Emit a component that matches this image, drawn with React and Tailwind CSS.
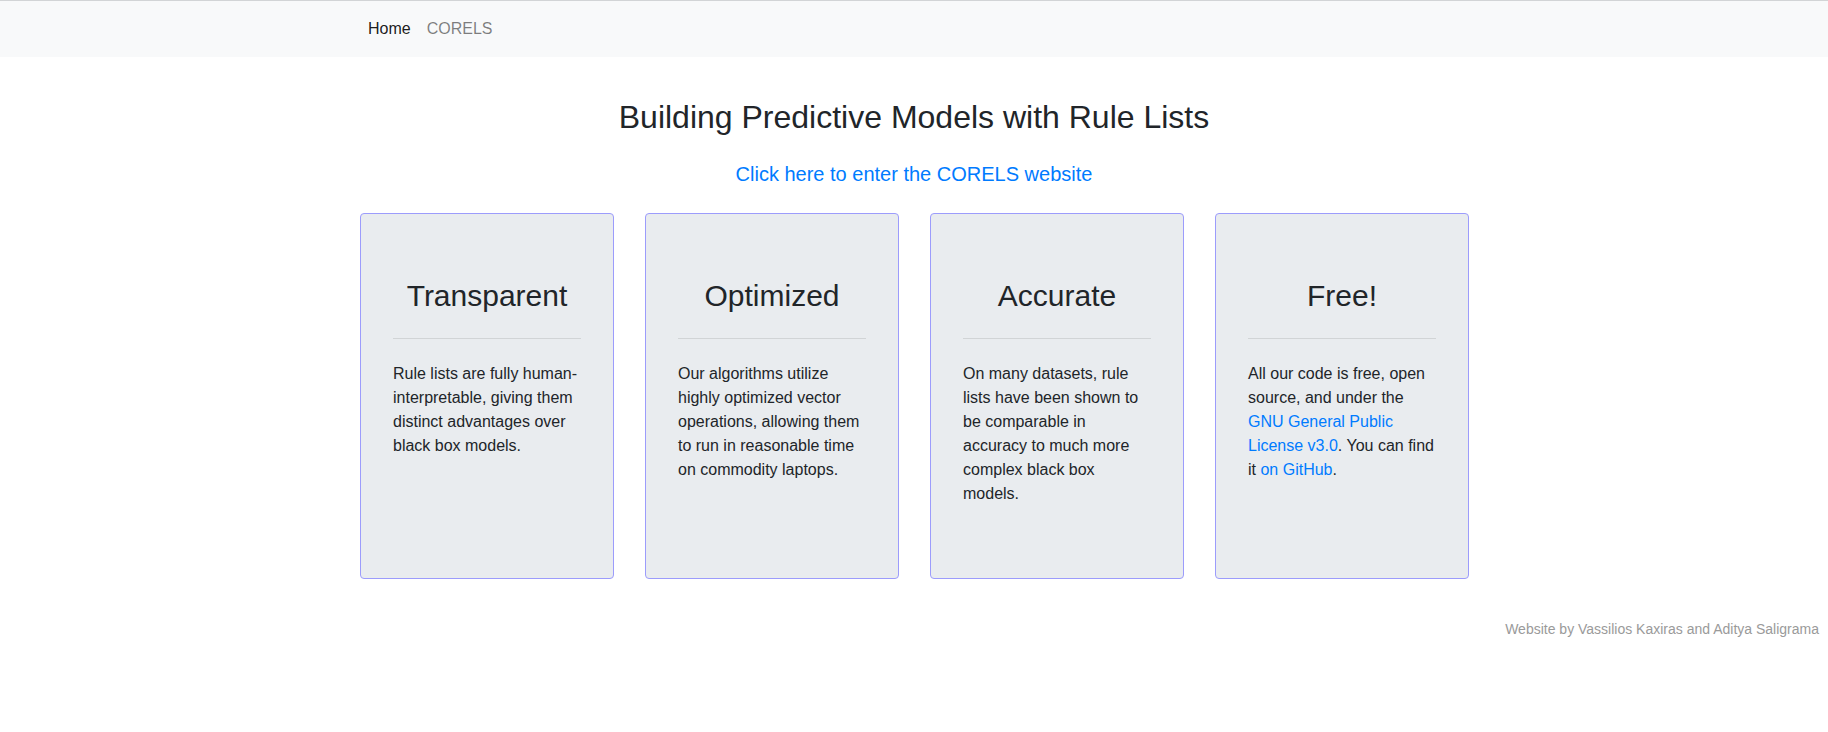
import React from 'react';

const FEATURES = [
  {
    title: 'Transparent',
    body: 'Rule lists are fully human-interpretable, giving them distinct advantages over black box models.',
  },
  {
    title: 'Optimized',
    body: 'Our algorithms utilize highly optimized vector operations, allowing them to run in reasonable time on commodity laptops.',
  },
  {
    title: 'Accurate',
    body: 'On many datasets, rule lists have been shown to be comparable in accuracy to much more complex black box models.',
  },
];

function FeatureCard({ title, children }) {
  return (
    <div className="h-[366px] rounded-[4px] border border-[#9c9cfc] bg-[#e9ecef] px-8 pt-16">
      <h3 className="text-center text-[30px] leading-[36px] text-[#212529]">{title}</h3>
      <hr className="mt-6 mb-[23px] border-t border-[rgba(0,0,0,0.1)]" />
      <p className="text-base leading-6 text-[#212529]">{children}</p>
    </div>
  );
}

export default function App() {
  return (
    <div className="min-h-[732px] bg-white font-['Liberation_Sans',Arial,sans-serif]">
      {/* Navbar */}
      <nav className="h-[57px] border-t border-[#d2d4d6] bg-[#f8f9fa]">
        <div className="mx-auto flex w-[1140px] px-[16px] py-[8px]">
          <a className="px-2 py-2 text-base leading-6 text-[rgba(0,0,0,0.9)]" href="#">Home</a>
          <a className="px-2 py-2 text-base leading-6 text-[rgba(0,0,0,0.5)]" href="#">CORELS</a>
        </div>
      </nav>

      <main className="mx-auto w-[1140px] px-[16px]">
        <h2 className="mt-[41px] text-center text-[32px] leading-[38px] text-[#212529]">
          Building Predictive Models with Rule Lists
        </h2>
        <p className="mt-[23px] text-center text-[20px] leading-[30px]">
          <a className="text-[#007bff]" href="#">Click here to enter the CORELS website</a>
        </p>

        <div className="mt-[24px] grid grid-cols-[repeat(4,254px)] gap-[31px]">
          {FEATURES.map((f) => (
            <FeatureCard key={f.title} title={f.title}>{f.body}</FeatureCard>
          ))}
          <FeatureCard title="Free!">
            All our code is free, open source, and under the{' '}
            <a className="text-[#007bff]" href="#">GNU General Public License v3.0</a>. You can find it{' '}
            <a className="text-[#007bff]" href="#">on GitHub</a>.
          </FeatureCard>
        </div>
      </main>

      <footer className="mt-[40px] pr-[9px] text-right text-sm leading-[21px] text-[#9a9a9a]">
        Website by Vassilios Kaxiras and Aditya Saligrama
      </footer>
    </div>
  );
}
